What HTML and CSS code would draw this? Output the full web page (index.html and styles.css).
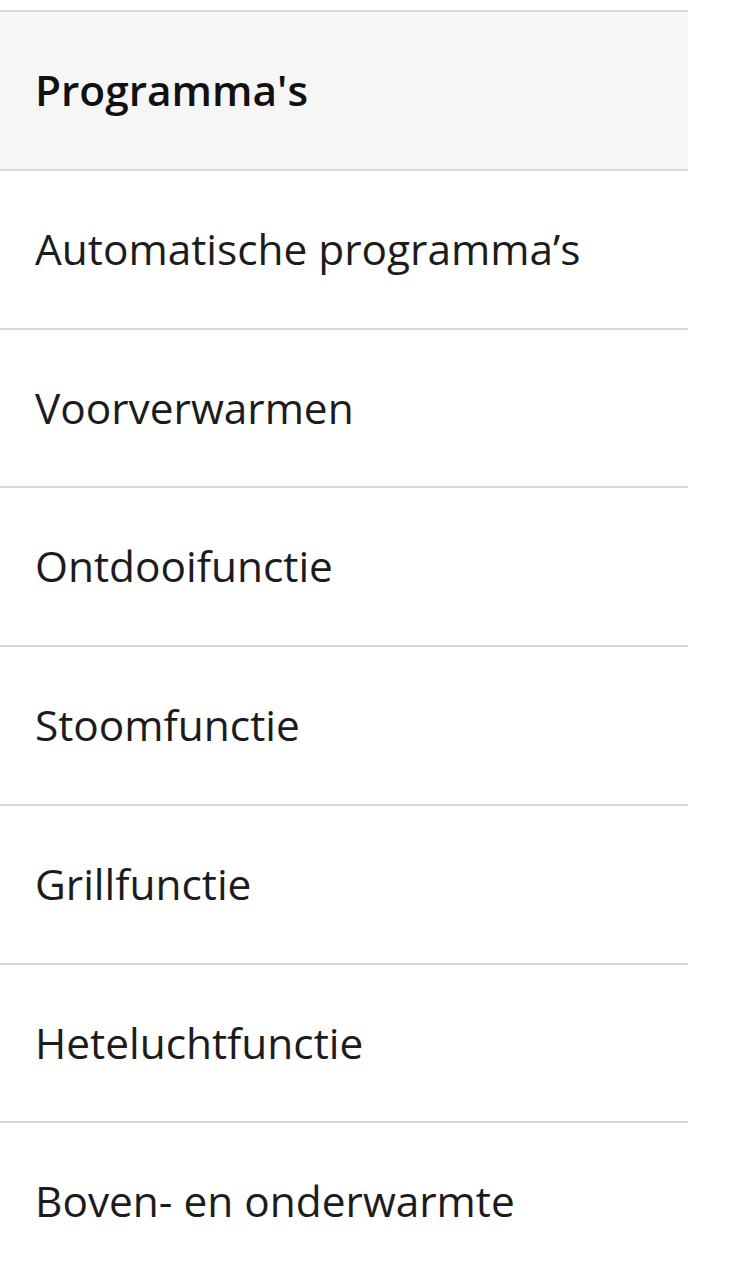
FILE: index.html
```html
<!DOCTYPE html>
<html lang="nl">
<head>
<meta charset="utf-8">
<title>Programma's</title>
<link rel="stylesheet" href="styles.css">
</head>
<body>
<div class="list">
  <div class="row head">Programma's</div>
  <div class="row">Automatische programma’s</div>
  <div class="row">Voorverwarmen</div>
  <div class="row">Ontdooifunctie</div>
  <div class="row">Stoomfunctie</div>
  <div class="row">Grillfunctie</div>
  <div class="row">Heteluchtfunctie</div>
  <div class="row">Boven- en onderwarmte</div>
</div>
</body>
</html>
```

FILE: styles.css
```css
html, body {
  margin: 0;
  padding: 0;
  background: #ffffff;
}
body {
  font-family: "Open Sans", "Noto Sans", sans-serif;
  color: #1c1c1c;
}
.list {
  margin-top: 10px;
  width: 688px;
  display: flex;
  flex-direction: column;
}
.row {
  box-sizing: border-box;
  height: 158.75px;
  border-top: 2px solid #d7d7d7;
  display: flex;
  align-items: center;
  padding-left: 35px;
  font-size: 42.4px;
  line-height: 1;
}
.row.head {
  background: #f6f6f6;
  font-weight: 600;
  color: #111111;
}
```
